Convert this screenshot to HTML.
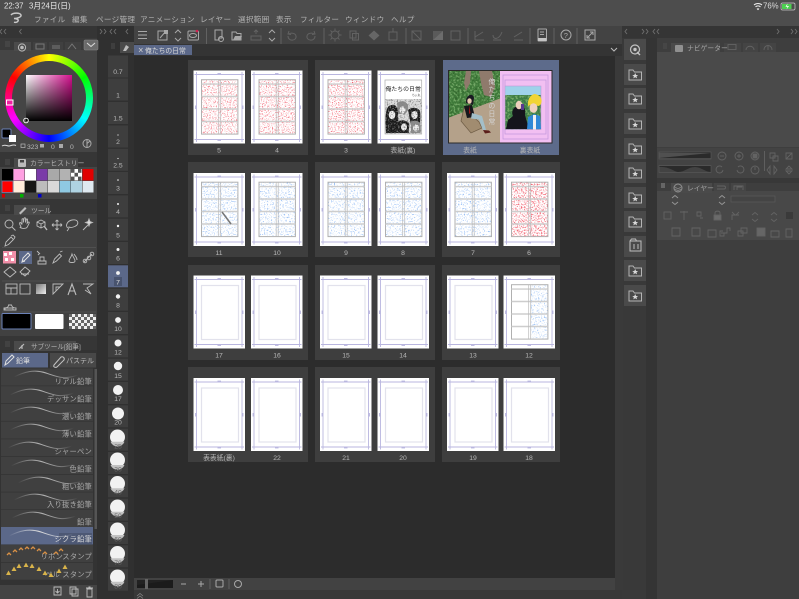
<!DOCTYPE html>
<html><head><meta charset="utf-8"><style>
html,body{margin:0;padding:0;background:#2c2c2c}
body{width:799px;height:599px;overflow:hidden;position:relative;filter:blur(.35px)}
svg{position:absolute;left:0;top:0}
text{font-family:"Liberation Sans","Noto Sans CJK JP",sans-serif;font-size:7.3px;fill:#b4b4b4}
.m text{font-size:7.6px;fill:#b2b2b2;letter-spacing:.3px}
.l text{text-anchor:middle;font-size:6.8px;fill:#b8b8b8}
.r text{text-anchor:end;font-size:7.3px;fill:#aaa;letter-spacing:.2px}
.i{fill:none;stroke:#a8a8a8;stroke-width:1}
.d{fill:none;stroke:#626262;stroke-width:1}
.t{fill:none;stroke:#bcbcbc;stroke-width:.9}
.n{fill:none;stroke:#636363;stroke-width:.9}
#wheel{position:absolute;left:5px;top:54px;width:88px;height:88px;border-radius:50%;background:conic-gradient(#ff0 0deg,#0f0 60deg,#0ff 120deg,#00f 180deg,#f0f 240deg,#f00 300deg,#ff0 360deg)}
#hole{position:absolute;left:12px;top:61px;width:74px;height:74px;border-radius:50%;background:#454545}
#sv{position:absolute;left:26px;top:75px;width:46px;height:46px;background:linear-gradient(to bottom,transparent,#000),linear-gradient(to right,#fff,#d4108e)}
</style></head><body>
<svg width="799" height="599" viewBox="0 0 799 599">
<defs>
<linearGradient id="bg" x1="0" x2="1" y1="0" y2="0"><stop offset="0" stop-color="#fff" stop-opacity="0"/><stop offset=".5" stop-color="#ddd"/><stop offset="1" stop-color="#fff" stop-opacity="0"/></linearGradient>
<filter id="r1" x="0" y="0" width="1" height="1" color-interpolation-filters="sRGB"><feTurbulence type="fractalNoise" baseFrequency=".8" numOctaves="2" seed="3"/><feColorMatrix values="0 0 0 0 .95 0 0 0 0 .36 0 0 0 0 .42 3.500 0 0 0 -1.800"/><feGaussianBlur stdDeviation=".3"/></filter>
<filter id="r2" x="0" y="0" width="1" height="1" color-interpolation-filters="sRGB"><feTurbulence type="fractalNoise" baseFrequency=".8" numOctaves="2" seed="11"/><feColorMatrix values="0 0 0 0 .95 0 0 0 0 .36 0 0 0 0 .42 3.500 0 0 0 -1.800"/><feGaussianBlur stdDeviation=".3"/></filter>
<filter id="r3" x="0" y="0" width="1" height="1" color-interpolation-filters="sRGB"><feTurbulence type="fractalNoise" baseFrequency=".8" numOctaves="2" seed="23"/><feColorMatrix values="0 0 0 0 .95 0 0 0 0 .36 0 0 0 0 .42 3.500 0 0 0 -1.800"/><feGaussianBlur stdDeviation=".3"/></filter>
<filter id="r4" x="0" y="0" width="1" height="1" color-interpolation-filters="sRGB"><feTurbulence type="fractalNoise" baseFrequency=".7" numOctaves="2" seed="37"/><feColorMatrix values="0 0 0 0 .95 0 0 0 0 .36 0 0 0 0 .42 4 0 0 0 -1.950"/><feGaussianBlur stdDeviation=".3"/></filter>
<filter id="b1" x="0" y="0" width="1" height="1" color-interpolation-filters="sRGB"><feTurbulence type="fractalNoise" baseFrequency=".7" numOctaves="2" seed="5"/><feColorMatrix values="0 0 0 0 .45 0 0 0 0 .66 0 0 0 0 .95 3 0 0 0 -1.600"/><feGaussianBlur stdDeviation=".3"/></filter>
<filter id="b2" x="0" y="0" width="1" height="1" color-interpolation-filters="sRGB"><feTurbulence type="fractalNoise" baseFrequency=".7" numOctaves="2" seed="14"/><feColorMatrix values="0 0 0 0 .45 0 0 0 0 .66 0 0 0 0 .95 3 0 0 0 -1.600"/><feGaussianBlur stdDeviation=".3"/></filter>
<filter id="b3" x="0" y="0" width="1" height="1" color-interpolation-filters="sRGB"><feTurbulence type="fractalNoise" baseFrequency=".7" numOctaves="2" seed="29"/><feColorMatrix values="0 0 0 0 .45 0 0 0 0 .66 0 0 0 0 .95 3 0 0 0 -1.600"/><feGaussianBlur stdDeviation=".3"/></filter>
<filter id="g1" x="0" y="0" width="1" height="1" color-interpolation-filters="sRGB"><feTurbulence type="fractalNoise" baseFrequency=".45" numOctaves="2" seed="8"/><feColorMatrix values="0 0 0 0 .2 0 0 0 0 .4 0 0 0 0 .18 5 0 0 0 -2.700"/></filter>
<filter id="g2" x="0" y="0" width="1" height="1" color-interpolation-filters="sRGB"><feTurbulence type="fractalNoise" baseFrequency=".5" numOctaves="2" seed="17"/><feColorMatrix values="0 0 0 0 .45 0 0 0 0 .66 0 0 0 0 .4 6 0 0 0 -2.900"/></filter>
<filter id="k1" x="0" y="0" width="1" height="1" color-interpolation-filters="sRGB"><feTurbulence type="fractalNoise" baseFrequency=".7" numOctaves="2" seed="41"/><feColorMatrix values="0 0 0 0 .5 0 0 0 0 .5 0 0 0 0 .5 4 0 0 0 -2"/></filter>
<symbol id="pg" overflow="visible"><rect width="51.5" height="73" fill="#fff"/></symbol>
<symbol id="fr" overflow="visible"><path d="M3 1.500v70M48.500 1.500v70M1 4h49.500M1 69h49.500" fill="none" stroke="#b9b6df" stroke-width=".9"/><g fill="#b9b6df"><rect x="24" y="2.600" width="3.500" height="1.400"/><rect x="24" y="69" width="3.500" height="1.400"/><rect x="1.600" y="35" width="1.400" height="3.500"/><rect x="48.500" y="35" width="1.400" height="3.500"/></g></symbol>
<symbol id="in" overflow="visible"><rect x="8" y="10" width="37" height="54" fill="none" stroke="#e2e2ec" stroke-width="1.200"/></symbol>
<symbol id="gr" overflow="visible"><g fill="none"><rect x="8" y="9.200" width="36.400" height="54.400" stroke="#b0b0b0" stroke-width="1"/><path d="M8 13.600h36.400M8 26h36.400M8 38.500h36.400M8 51h36.400" stroke="#cdcdcd" stroke-width="1.400"/><path d="M25.200 9.200v54.400M27.200 9.200v54.400" stroke="#bbb" stroke-width=".7"/></g></symbol>
<symbol id="br" overflow="visible"><path d="M0 9C10 4 20 1 32 5S50 12 64 7" fill="none" stroke="url(#bg)" stroke-width="1"/></symbol>
<symbol id="fs" overflow="visible"><rect width="22" height="21" fill="#4a4a4a"/><path d="M5 6h4l1.500 2H17.500V16H5z" fill="none" stroke="#b4b4b4" stroke-width="1"/><path d="M11.200 9l.9 2 2 .1-1.600 1.300.6 2-1.900-1.100-1.900 1.100.6-2L8.300 11.100l2-.1z" fill="#d8d8d8"/></symbol>
<linearGradient id="gd" x1="0" y1="0" x2="1" y2="1"><stop offset="0" stop-color="#777"/><stop offset="1" stop-color="#eee"/></linearGradient>
</defs>

<!-- base areas -->
<rect width="799" height="599" fill="#2c2c2c"/>
<rect width="799" height="26" fill="#4d4d4d"/>
<rect y="26" width="799" height="12" fill="#353535"/>
<rect x="0" y="38" width="97" height="561" fill="#363636"/>
<rect x="97" y="26" width="37" height="573" fill="#303030"/>
<rect x="622" y="38" width="35" height="561" fill="#393939"/>
<rect x="646" y="38" width="11" height="561" fill="#343434"/>
<rect x="657" y="38" width="142" height="561" fill="#3e3e3e"/>
<rect x="134" y="26" width="488" height="18" fill="#434343"/>
<rect x="134" y="44" width="488" height="12" fill="#343434"/>
<rect x="615" y="56" width="8" height="534" fill="#3a3a3a"/>
<rect x="134" y="578" width="481" height="12" fill="#424242"/>
<rect x="134" y="590" width="488" height="9" fill="#383838"/>

<!-- status and menu -->
<text x="4" y="8.500" style="font-size:7.800px;fill:#e4e4e4">22:37</text>
<text x="29" y="8.500" style="font-size:7.800px;fill:#e4e4e4">3月24日(日)</text>
<path d="M754 5a6 6 0 0 1 8 0M755.500 6.800a4 4 0 0 1 5 0M757 8.500l1 1 1-1" fill="none" stroke="#eee" stroke-width="1"/>
<text x="763" y="8.500" style="font-size:7.800px;fill:#ddd">76%</text>
<rect x="781" y="3" width="14" height="7" rx="1.500" fill="none" stroke="#ccc" stroke-width=".7"/><rect x="782" y="4" width="9.500" height="5" fill="#4ccf50"/><path d="M787.500 3.500l-2 3.200h2l-1 2.800 2.500-3.500h-2z" fill="#fff"/>
<path d="M11 15c2-2.500 9-2.500 10 0 .7 2.500-5 3.500-7 3.500 3 0 6 1.500 3 3.500-1 .5-2 .5-3 .2" fill="none" stroke="#c9c9c9" stroke-width="1.500"/>
<g class="m"><text x="34" y="22">ファイル</text><text x="72" y="22">編集</text><text x="96" y="22">ページ管理</text><text x="140" y="22">アニメーション</text><text x="200" y="22">レイヤー</text><text x="238" y="22">選択範囲</text><text x="276" y="22">表示</text><text x="300" y="22">フィルター</text><text x="345" y="22">ウィンドウ</text><text x="391" y="22">ヘルプ</text></g>
<g fill="none" stroke="#707070" stroke-width=".9"><path d="M2 29l-2 2.500 2 2.500M6 29l-2 2.500 2 2.500M21.500 29l-2 2.500 2 2.500M100 29l2 2.500-2 2.500M104 29l2 2.500-2 2.500M112 29l-2 2.500 2 2.500M116 29l-2 2.500 2 2.500M128 29l-2 2.500 2 2.500M627 29l-2 2.500 2 2.500M642 29l2 2.500-2 2.500M646 29l2 2.500-2 2.500M655 29l-2 2.500 2 2.500M659 29l-2 2.500 2 2.500M777 29l2 2.500-2 2.500M791 29l2 2.500-2 2.500M795 29l2 2.500-2 2.500"/></g>

<!-- main toolbar -->
<path class="i" d="M138 31.500h9M138 35h9M138 38.500h9" stroke-width="1.300"/>
<path class="i" d="M158 31h9v9h-9zM160 38l6-7"/><rect x="164" y="30" width="4" height="4" fill="#a8a8a8"/>
<path class="i" d="M175 33l3-3 3 3M175 38l3 3 3-3"/>
<rect x="188" y="31" width="10.500" height="9" rx="1" class="i"/><ellipse cx="193" cy="35.500" rx="3.500" ry="2" class="i"/><circle cx="197" cy="31" r="1.300" fill="#d02050"/>
<path class="d" d="M206.500 28v16"/>
<path class="i" d="M215 30h7v8h-3v2h-4zM215 30v8"/><circle cx="221" cy="39" r="2.500" class="i"/>
<path class="i" d="M232 32h4l1 1.500h4V40H232z"/><path d="M233 40l2-4h7l-2 4z" fill="#a8a8a8"/>
<path class="d" d="M251 40v-4h10v4zM256 30v4M254 32l2-2 2 2" stroke="#808080"/>
<path class="i" d="M269 33l3-3 3 3M269 38l3 3 3-3"/>
<path class="d" d="M281 28v16M324 28v16M406 28v16M468 28v16M530 28v16M554 28v16M577 28v16"/>
<path class="d" d="M288 36c0 6 9 5 8 0-.5-3-5-3.500-7-2M289 31l-1 3 3 .5M315 36c0 6-9 5-8 0 .5-3 5-3.500 7-2M314 31l1 3-3 .5"/>
<circle cx="335" cy="35" r="4" class="d"/><path class="d" d="M335 28.500v2M335 39.500v2M328.500 35h2M339.500 35h2M330.500 30.500l1.500 1.500M338 38l1.500 1.500M339.500 30.500L338 32M332 38l-1.500 1.500"/>
<path class="d" d="M350 31h6v7h-6zM352.500 33.500h6v6.500h-6z"/>
<path d="M374 30.500l5.500 5-5.500 5-5.500-5z" fill="#666"/>
<path class="d" d="M389 32h8v8h-8zM393 28v4"/>
<path class="d" d="M412 31h9v9h-9zM412 31l9 9"/>
<path d="M433 40V31h10v9z" fill="#5a5a5a"/><path d="M433 40l10-9v9z" fill="#6c6c6c"/>
<path class="d" d="M451 31h9v9h-9z" stroke-width="1.400"/>
<path class="d" d="M475 40h9M475 40v-9M475 37l8-5"/><path class="d" d="M493 40h8M493 35c0 5 6 5 9-3"/><path class="d" d="M514 40h9M514 37l8-5"/>
<rect x="538" y="29" width="8.500" height="12" rx=".5" class="i" fill="none"/><rect x="538" y="38" width="8.500" height="3" fill="#c4c4c4"/><path class="i" d="M540 32h4M540 34.500h4"/>
<circle cx="566" cy="35" r="5" class="i"/><text x="563.800" y="38" style="font-size:7.500px;fill:#aaa">?</text>
<rect x="585" y="30" width="10" height="10" class="i"/><path class="i" d="M587 38l6-6M590 32h3v3M587 35v3h3"/>

<!-- doc tab -->
<rect x="134" y="45" width="58" height="10" fill="#5b6889"/>
<path d="M139 48l3.500 4M142.500 48l-3.500 4" stroke="#ccc" stroke-width=".7"/>
<text x="145" y="53" style="font-size:6.800px;fill:#d8d8d8">俺たちの日常</text>
<path d="M611 48l3 3 3-3" fill="none" stroke="#bbb" stroke-width="1"/>

<!-- page panels -->
<g fill="#3e3e3e">
<rect x="188" y="60" width="120" height="95"/><rect x="315" y="60" width="120" height="95"/>
<rect x="188" y="162" width="120" height="95"/><rect x="315" y="162" width="120" height="95"/><rect x="442" y="162" width="118" height="95"/>
<rect x="188" y="265" width="120" height="95"/><rect x="315" y="265" width="120" height="95"/><rect x="442" y="265" width="118" height="95"/>
<rect x="188" y="367" width="120" height="95"/><rect x="315" y="367" width="120" height="95"/><rect x="442" y="367" width="118" height="95"/>
</g>
<rect x="443" y="60" width="116" height="95" fill="#5d6b8b"/>

<!-- row 1 -->
<use href="#pg" x="193.500" y="70.500"/><rect x="201" y="80" width="37" height="54" filter="url(#r1)"/><use href="#gr" x="193.500" y="70.500"/><use href="#fr" x="193.500" y="70.500"/>
<use href="#pg" x="251" y="70.500"/><rect x="259" y="80" width="37" height="54" filter="url(#r2)"/><use href="#gr" x="251" y="70.500"/><use href="#fr" x="251" y="70.500"/>
<use href="#pg" x="320" y="70.500"/><rect x="328" y="80" width="37" height="54" filter="url(#r3)"/><use href="#gr" x="320" y="70.500"/><use href="#fr" x="320" y="70.500"/>
<use href="#pg" x="377.500" y="70.500"/><use href="#fr" x="377.500" y="70.500"/>
<rect x="385" y="80" width="36.700" height="54" fill="#fff" stroke="#aaa" stroke-width=".7"/>
<text x="385.500" y="91" style="font-size:5.900px;fill:#222">俺たちの日常</text>
<text x="412" y="96" style="font-size:2.800px;fill:#444">ちぃ丸</text>
<rect x="385.500" y="99" width="36" height="34.500" fill="#dcdcdc"/>
<g fill="#1a1a1a"><path d="M386 133c-1-12-1-24 3-27 5-3 10 0 9 8l1 19z"/><path d="M408 110c3-3 10-3 12 1 1 6 0 10 0 14h-9z"/><path d="M398 122c3-3 8-2 11 1 1 4-1 6 0 10h-11z"/></g>
<g fill="#8c8c8c"><path d="M397 103c4-3 9-2 11 2 1 5-1 7-3 9l-7 0z"/><path d="M411 122c2-2 7-2 9 1 1 4 1 6 0 10h-9z"/></g>
<g fill="#efefef"><ellipse cx="392" cy="115" rx="3.300" ry="4.200"/><ellipse cx="402.500" cy="110" rx="3" ry="3.600"/><ellipse cx="414.500" cy="115" rx="3.200" ry="4"/><ellipse cx="404" cy="127" rx="3" ry="3.600"/><ellipse cx="416" cy="128" rx="3" ry="3.600"/></g>
<rect x="385.500" y="99" width="36" height="34.500" filter="url(#k1)"/>

<!-- spread -->
<rect x="448" y="70" width="104.500" height="73.500" fill="#2a2a2a"/>
<rect x="449" y="71" width="51" height="71.500" fill="#3f7a3a"/>
<rect x="449" y="71" width="51" height="50" filter="url(#g2)"/>
<rect x="449" y="71" width="51" height="50" filter="url(#g1)"/>
<g fill="#8f7a6c"><path d="M466 71h5l-1 12-4 8-2-8z"/><path d="M479 71h13l3 16-4 10-7-2-3-12z"/></g>
<path d="M449 117.500l51-19v44h-51z" fill="#b4a18a"/>
<path d="M464 108l15 14 3 6-11 5-10-12z" fill="#a18c70" stroke="#6e5c45" stroke-width=".7"/>
<path d="M466 103c-1-8 7-11 8-5l-1 7z" fill="#1a1a22"/><ellipse cx="469.500" cy="101" rx="2.200" ry="2.800" fill="#e8c8b0"/>
<path d="M464 106l8-1 3 12-8 1z" fill="#17171c"/><path d="M469 105l1.500 8-1.500 1z" fill="#a01616"/>
<path d="M472 113l10 3 4 14-3 .5-4-11-8-1z" fill="#a3bfc9"/><path d="M483 130l6 .5 2 2-6 1z" fill="#5a1e1a"/>
<g><text x="488.500" y="84" style="font-size:6.800px;fill:#d4d4d4">俺</text><text x="488.500" y="92" style="font-size:6.800px;fill:#d4d4d4">た</text><text x="488.500" y="100" style="font-size:6.800px;fill:#d4d4d4">ち</text><text x="488.500" y="108" style="font-size:6.800px;fill:#d4d4d4">の</text><text x="488.500" y="116" style="font-size:6.800px;fill:#d4d4d4">日</text><text x="488.500" y="124" style="font-size:6.800px;fill:#d4d4d4">常</text></g>
<rect x="500" y="71" width="51.500" height="71.500" fill="#f2bff2"/>
<g fill="none" stroke="#c59add" stroke-width=".8"><rect x="503" y="75" width="45" height="64"/><rect x="505" y="80" width="41" height="54"/></g>
<rect x="505" y="86" width="36" height="43.500" fill="#9fd2ea"/><rect x="505" y="95" width="36" height="34.500" fill="#3d7c45"/>
<rect x="505" y="95" width="36" height="34.500" filter="url(#g2)"/>
<rect x="505" y="86" width="36" height="43.500" fill="none" stroke="#bb9bd6" stroke-width=".6"/>
<path d="M506 129l2-9 5-4c-2-4 0-9 5-10 6-1 8 3 7 9l4 14z" fill="#15151c"/><ellipse cx="519" cy="105" rx="3.300" ry="4.300" fill="#eccfbc"/><rect x="521" y="104" width="3" height="6" fill="#5a3a90"/>
<path d="M527 129l1-12 6-3 6 2 1 13z" fill="#2f88d6"/><rect x="533" y="115" width="3" height="14.500" fill="#f0f0f0"/>
<path d="M528 106c-1-8 4-12 7-12 5 1 8 5 6 10l-2 2-8-1z" fill="#f1d534"/><ellipse cx="533.500" cy="108" rx="4" ry="4.800" fill="#f0d2bf"/>

<!-- row 2 -->
<use href="#pg" x="193.500" y="173"/><rect x="201" y="182" width="37" height="55" filter="url(#b1)"/><use href="#gr" x="193.500" y="173"/><use href="#fr" x="193.500" y="173"/><path d="M222 212l9 12" stroke="#777" stroke-width="1.600"/>
<use href="#pg" x="251" y="173"/><rect x="259" y="182" width="37" height="55" filter="url(#b2)"/><use href="#gr" x="251" y="173"/><use href="#fr" x="251" y="173"/>
<use href="#pg" x="320" y="173"/><rect x="328" y="182" width="37" height="55" filter="url(#b3)"/><use href="#gr" x="320" y="173"/><use href="#fr" x="320" y="173"/>
<use href="#pg" x="377.500" y="173"/><rect x="385" y="182" width="37" height="55" filter="url(#b1)"/><use href="#gr" x="377.500" y="173"/><use href="#fr" x="377.500" y="173"/>
<use href="#pg" x="447" y="173"/><rect x="455" y="182" width="37" height="55" filter="url(#b2)"/><use href="#gr" x="447" y="173"/><use href="#fr" x="447" y="173"/>
<use href="#pg" x="503.500" y="173"/><rect x="511" y="182" width="37" height="55" filter="url(#r4)"/><use href="#gr" x="503.500" y="173"/><use href="#fr" x="503.500" y="173"/>

<!-- row 3 -->
<use href="#pg" x="193.500" y="275.500"/><use href="#in" x="193.500" y="275.500"/><use href="#fr" x="193.500" y="275.500"/>
<use href="#pg" x="251" y="275.500"/><use href="#in" x="251" y="275.500"/><use href="#fr" x="251" y="275.500"/>
<use href="#pg" x="320" y="275.500"/><use href="#in" x="320" y="275.500"/><use href="#fr" x="320" y="275.500"/>
<use href="#pg" x="377.500" y="275.500"/><use href="#in" x="377.500" y="275.500"/><use href="#fr" x="377.500" y="275.500"/>
<use href="#pg" x="447" y="275.500"/><use href="#in" x="447" y="275.500"/><use href="#fr" x="447" y="275.500"/>
<use href="#pg" x="503.500" y="275.500"/><rect x="531" y="285" width="17" height="54" filter="url(#b3)"/><use href="#gr" x="503.500" y="275.500"/><use href="#fr" x="503.500" y="275.500"/>

<!-- row 4 -->
<use href="#pg" x="193.500" y="378"/><use href="#in" x="193.500" y="378"/><use href="#fr" x="193.500" y="378"/>
<use href="#pg" x="251" y="378"/><use href="#in" x="251" y="378"/><use href="#fr" x="251" y="378"/>
<use href="#pg" x="320" y="378"/><use href="#in" x="320" y="378"/><use href="#fr" x="320" y="378"/>
<use href="#pg" x="377.500" y="378"/><use href="#in" x="377.500" y="378"/><use href="#fr" x="377.500" y="378"/>
<use href="#pg" x="447" y="378"/><use href="#in" x="447" y="378"/><use href="#fr" x="447" y="378"/>
<use href="#pg" x="503.500" y="378"/><use href="#in" x="503.500" y="378"/><use href="#fr" x="503.500" y="378"/>

<g class="l">
<text x="219" y="152.500">5</text><text x="277" y="152.500">4</text><text x="346" y="152.500">3</text><text x="403" y="152.500">表紙(裏)</text><text x="470" y="152.500">表紙</text><text x="530" y="152.500">裏表紙</text>
<text x="219" y="255">11</text><text x="277" y="255">10</text><text x="346" y="255">9</text><text x="403" y="255">8</text><text x="473" y="255">7</text><text x="529" y="255">6</text>
<text x="219" y="357.500">17</text><text x="277" y="357.500">16</text><text x="346" y="357.500">15</text><text x="403" y="357.500">14</text><text x="473" y="357.500">13</text><text x="529" y="357.500">12</text>
<text x="219" y="460">表表紙(裏)</text><text x="277" y="460">22</text><text x="346" y="460">21</text><text x="403" y="460">20</text><text x="473" y="460">19</text><text x="529" y="460">18</text>
</g>

<!-- canvas bottom bar -->
<rect x="137" y="580" width="36" height="8" fill="#222"/><path d="M137 585l36-5v8h-36z" fill="#1b1b1b"/><rect x="145" y="579" width="3" height="10" fill="#666"/>
<path class="i" d="M181 584h5M198 584h6M201 581v6"/><path class="d" d="M210 579v10M229 579v10"/>
<rect x="216" y="580" width="7" height="7" rx="1" class="i"/><circle cx="238" cy="584" r="3.500" class="i"/>
<path d="M137 596l3-2.500 3 2.500M137 598.500l3-2.500 3 2.500" fill="none" stroke="#888" stroke-width=".7"/>

<!-- color panel -->
<rect x="0" y="50" width="97" height="102" fill="#454545"/>
<rect x="0" y="38" width="97" height="12" fill="#3a3a3a"/>
<path d="M5 44h5M5 46h5M5 42h5" stroke="#666" stroke-width=".6"/>
<rect x="14" y="42" width="17" height="9" fill="#4b4b4b"/><circle cx="22" cy="47.500" r="3.600" fill="none" stroke="#bbb"/><circle cx="22" cy="47.500" r="1.800" fill="#bbb"/>
<rect x="33" y="42" width="14" height="8" fill="#404040"/><rect x="36" y="44" width="8" height="5" fill="none" stroke="#777"/>
<rect x="49" y="42" width="14" height="8" fill="#404040"/><path d="M52 46h8M52 48h8" stroke="#777"/>
<rect x="65" y="42" width="16" height="8" fill="#404040"/><path d="M68 49l4-5 4 5" fill="none" stroke="#777"/>
<rect x="84" y="40" width="14" height="10" rx="1" fill="#6b6b6b" stroke="#888" stroke-width=".5"/><path d="M87 43l4 3.500 4-3.500" fill="none" stroke="#ddd"/>

<!-- history panel -->
<rect x="0" y="167" width="97" height="32" fill="#454545"/>
<path d="M5 160h5M5 162h5M5 164h5" stroke="#666" stroke-width=".6"/>
<rect x="14" y="158" width="64" height="10" fill="#4a4a4a"/><rect x="18" y="159" width="8" height="8" rx="1" fill="#bbb"/><rect x="20" y="160" width="4" height="2.500" fill="#444"/>
<text x="30" y="165.500" style="font-size:6.800px;fill:#b0b0b0">カラーヒストリー</text>
<rect x="2" y="169" width="11" height="11.500" fill="#000"/><rect x="13.500" y="169" width="11" height="11.500" fill="#ffa0e2"/><rect x="25" y="169" width="11" height="11.500" fill="#fff"/><rect x="36.500" y="169" width="11" height="11.500" fill="#7a3ba8"/><rect x="48" y="169" width="11" height="11.500" fill="#a9a9a9"/><rect x="59.500" y="169" width="11" height="11.500" fill="#b2b2b2"/>
<rect x="71" y="169" width="11" height="11.500" fill="#fff"/><g fill="#555"><rect x="71" y="169" width="3.500" height="3.800"/><rect x="78" y="169" width="3.500" height="3.800"/><rect x="74.500" y="172.800" width="3.500" height="3.800"/><rect x="71" y="176.600" width="3.500" height="3.800"/><rect x="78" y="176.600" width="3.500" height="3.800"/></g>
<rect x="82.500" y="169" width="11" height="11.500" fill="#e00000"/>
<rect x="2" y="181" width="11" height="11.500" fill="#ff0000" stroke="#6d7fae" stroke-width=".8"/><rect x="13.500" y="181" width="11" height="11.500" fill="#ffecdc"/><rect x="25" y="181" width="11" height="11.500" fill="#161616"/><rect x="36.500" y="181" width="11" height="11.500" fill="#bcbcbc"/><rect x="48" y="181" width="11" height="11.500" fill="#d9d9d9"/><rect x="59.500" y="181" width="11" height="11.500" fill="#8fc9e2"/><rect x="71" y="181" width="11" height="11.500" fill="#afd3e2"/><rect x="82.500" y="181" width="11" height="11.500" fill="#dfe9f0"/>
<rect x="2" y="194" width="3" height="3.500" fill="#d00000"/><rect x="20" y="194" width="3.500" height="3.500" fill="#00b000"/><rect x="38" y="194" width="3.500" height="3.500" fill="#0000c8"/>

<!-- tool panel -->
<rect x="0" y="214" width="97" height="122" fill="#414141"/>
<path d="M5 206h5M5 208h5M5 210h5" stroke="#666" stroke-width=".6"/>
<rect x="14" y="205" width="36" height="10" fill="#4a4a4a"/>
<path d="M19 213l6-6 1.500 1.500-6 6z" fill="#bbb"/><text x="31" y="213" style="font-size:6.800px;fill:#b0b0b0">ツール</text>
<g class="t">
<circle cx="9" cy="224" r="4"/><path d="M12 227l3.500 3.500"/>
<path d="M21 227c-1-2-2-4-1-4.500 1 0 1.500 1 2 2l0-5c0-1 1.500-1 1.500 0v3l.5-4c.2-1 1.500-1 1.500 0l0 4 .8-3c.3-1 1.500-.7 1.300.3l-.5 3.500 1-1c1-.7 1.500 0 1 1l-2 4c-1 1.500-6 1.500-7 0z"/>
<path d="M37 222l4-2 4 2v4l-4 2-4-2zM41 224v4M41 224l4-2M41 224l-4-2"/><path d="M44 226l3 4" stroke-width="1.400"/>
<path d="M57 220v10M52 225h10M57 220l-1.500 1.500M57 220l1.500 1.500M57 230l-1.500-1.500M57 230l1.500-1.500M52 225l1.500-1.500M52 225l1.500 1.500M62 225l-1.500-1.500M62 225l-1.500 1.500"/>
<path d="M68 228c-3-2-1-7 4-8 5-1 7 2 5 5-2 2-6 3-8 2 0 2-1 3-2 4"/>
<path d="M83 230l6-6"/><path d="M89 219l1 2.500 2.500 1-2.500 1-1 2.500-1-2.500-2.500-1 2.500-1z" fill="#ddd"/>
<path d="M5 246l1-4 5-5 2.500 2.500-5 5zM11 236l2-1 2 2-1 2"/>
</g>
<path d="M2 247.500h94M2 281h94M2 312h94" stroke="#555" stroke-width=".7"/>
<rect x="3" y="251" width="13" height="12.500" fill="#f08fa8"/><path d="M4 253h3v3H4zM9 252h3v3H9zM5 258h3v3H5zM11 258h3v3h-3z" fill="#fff"/>
<rect x="19" y="251" width="13" height="13" fill="#5b6889"/><path d="M22 262l1-4 5-5 2 2-5 5zM22 262l3-1" fill="none" stroke="#e2e2e2"/>
<g class="t">
<path d="M38 261h8v3h-8zM40 261v-4l4-0v4M38 254l1 1M37 251l3 3"/>
<path d="M53 263l1.500-4 5-5 2 2-5 5zM60 252l2.500-1"/>
<path d="M69 261c0-2 2-3 3-7 1 3 3 5 3 7s-6 2-6 0zM74 254c1 2 3 3 3 6"/>
<path d="M84 262l8-8"/><circle cx="85" cy="261" r="1.800"/><circle cx="89" cy="258" r="1.800"/><circle cx="92" cy="254" r="1.800"/>
<path d="M10 267l6 5-6 5-6-5z"/><path d="M25 267l5 4-5 5-5-4zM21 274h8"/>
<rect x="6" y="284" width="11" height="10"/><path d="M6 288h11M11 288v6"/>
<rect x="20" y="284" width="10" height="10"/>
<path d="M53 294v-10h10z"/><path d="M56 291v-4h4"/>
<path d="M68 295l4-11 4 11M69.500 291h5" stroke-width="1.100"/>
<path d="M83 284h10l-6 4 4 6-6-4"/>
<path d="M5 310v-2h8v2zM4 310h12v-2c-3 0-4-1-4.500-3h-3c0 2-1 3-4.500 3z"/>
</g>
<rect x="36" y="284" width="10" height="10" fill="url(#gd)"/>
<rect x="2" y="313.500" width="29" height="15.500" rx="1" fill="#000" stroke="#6c82b8" stroke-width="1"/>
<rect x="35" y="314" width="28.500" height="15" rx="1" fill="#fff"/>
<rect x="69" y="314" width="27" height="15" fill="#f0f0f0"/>
<g fill="#666"><rect x="69" y="314" width="3" height="3"/><rect x="75" y="314" width="3" height="3"/><rect x="81" y="314" width="3" height="3"/><rect x="87" y="314" width="3" height="3"/><rect x="93" y="314" width="3" height="3"/><rect x="72" y="317" width="3" height="3"/><rect x="78" y="317" width="3" height="3"/><rect x="84" y="317" width="3" height="3"/><rect x="90" y="317" width="3" height="3"/><rect x="69" y="320" width="3" height="3"/><rect x="75" y="320" width="3" height="3"/><rect x="81" y="320" width="3" height="3"/><rect x="87" y="320" width="3" height="3"/><rect x="93" y="320" width="3" height="3"/><rect x="72" y="323" width="3" height="3"/><rect x="78" y="323" width="3" height="3"/><rect x="84" y="323" width="3" height="3"/><rect x="90" y="323" width="3" height="3"/><rect x="69" y="326" width="3" height="3"/><rect x="75" y="326" width="3" height="3"/><rect x="81" y="326" width="3" height="3"/><rect x="87" y="326" width="3" height="3"/><rect x="93" y="326" width="3" height="3"/></g>

<!-- sub tool -->
<rect x="0" y="350" width="97" height="235" fill="#333"/>
<path d="M5 342h5M5 344h5M5 346h5" stroke="#666" stroke-width=".6"/>
<rect x="14" y="341" width="62" height="10" fill="#4a4a4a"/><path d="M19 349l5-5M22 349v-4" stroke="#bbb" stroke-width="1.200"/>
<text x="31" y="349" style="font-size:6.600px;fill:#b0b0b0">サブツール[鉛筆]</text>
<rect x="2" y="353" width="46" height="14.500" fill="#5b6889"/><rect x="50" y="353" width="46" height="14.500" fill="#484848"/>
<path d="M5 365l1-4 6-6 2 2-6 6z" fill="none" stroke="#e0e0e0"/><text x="16" y="363" style="font-size:7px;fill:#ddd">鉛筆</text>
<path d="M54 365l7-8c2-1 4 1 3 3l-7 7c-2 1-4-0-3-2z" fill="none" stroke="#c4c4c4"/><text x="66" y="363" style="font-size:7px;fill:#bbb">パステル</text>
<rect x="94.500" y="369" width="2.500" height="160" fill="#555"/>
<g fill="#404040"><rect x="1" y="368.500" width="92" height="17"/><rect x="1" y="386.200" width="92" height="17"/><rect x="1" y="403.900" width="92" height="17"/><rect x="1" y="421.600" width="92" height="17"/><rect x="1" y="439.300" width="92" height="17"/><rect x="1" y="457" width="92" height="17"/><rect x="1" y="474.700" width="92" height="17"/><rect x="1" y="492.400" width="92" height="17"/><rect x="1" y="510" width="92" height="17"/><rect x="1" y="545" width="92" height="17"/><rect x="1" y="562.700" width="92" height="17"/></g>
<rect x="1" y="527" width="92" height="17.500" fill="#5b6889"/><rect x="59" y="533" width="33" height="11" fill="#4d5874"/>
<g opacity=".75"><use href="#br" x="14" y="368"/><use href="#br" x="10" y="386"/><use href="#br" x="10" y="404"/><use href="#br" x="10" y="421"/><use href="#br" x="8" y="439"/><use href="#br" x="11" y="457"/><use href="#br" x="18" y="474"/><use href="#br" x="14" y="491"/><use href="#br" x="12" y="509"/></g><use href="#br" x="9" y="527"/>
<g class="r"><text x="92" y="384">リアル鉛筆</text><text x="92" y="401.500">デッサン鉛筆</text><text x="92" y="419">濃い鉛筆</text><text x="92" y="436.500">薄い鉛筆</text><text x="92" y="454">シャーペン</text><text x="92" y="471.500">色鉛筆</text><text x="92" y="489">粗い鉛筆</text><text x="92" y="507">入り抜き鉛筆</text><text x="92" y="524.500">鉛筆</text><text x="92" y="541.500" style="fill:#ddd">シクラ鉛筆</text><text x="92" y="559">スタンプ</text><text x="92" y="577">スタンプ</text><text x="63" y="559">リボン</text><text x="60" y="577">ベル</text></g>
<path d="M7 555l2-2 2 2M13 552l2-2 2 2M19 550l2-2 2 2M25 549l2-2 2 2M31 549l2-2 2 2M37 551l2-2 2 2M43 554l2-2 2 2M54 554l2-2 2 2M59 551l2-2 2 2" fill="none" stroke="#d99045" stroke-width="1.300"/>
<g fill="#d8b34a"><path d="M6 575l2.500-4.500 2.500 4.500zM11.500 571l2.500-4.500 2.500 4.500zM16.500 568l2.500-4.500 2.500 4.500zM23.500 567l2.500-4.500 2.500 4.500zM29.500 568l2.500-4.500 2.500 4.500zM36.500 571l2.500-4.500 2.500 4.500zM42.500 575l2.500-4.500 2.500 4.500zM48.500 577l2.500-4.500 2.500 4.500zM56.500 573l2.500-4.500 2.500 4.500zM62.500 569l2.500-4.500 2.500 4.500z"/></g>
<rect x="0" y="585" width="97" height="14" fill="#444"/>
<path class="t" d="M54 587h7v8h-7zM57.500 589v4M55.500 591l2 2 2-2M70 587h6v7h-6zM72 589h6v7h-6zM87 589h5v8h-5zM86 588h7M88.500 587h2"/>

<!-- brush size column -->
<g fill="#3e3e3e"><rect x="108" y="55.500" width="20" height="22"/><rect x="108" y="78.500" width="20" height="22"/><rect x="108" y="102" width="20" height="22"/><rect x="108" y="125.500" width="20" height="22"/><rect x="108" y="148.800" width="20" height="22"/><rect x="108" y="172" width="20" height="22"/><rect x="108" y="195.400" width="20" height="22"/><rect x="108" y="218.700" width="20" height="22"/><rect x="108" y="242" width="20" height="22"/><rect x="108" y="288.700" width="20" height="22"/><rect x="108" y="312" width="20" height="22"/><rect x="108" y="335.400" width="20" height="22"/><rect x="108" y="358.700" width="20" height="22"/><rect x="108" y="382" width="20" height="22"/><rect x="108" y="405.300" width="20" height="22"/><rect x="108" y="428.700" width="20" height="22"/><rect x="108" y="452" width="20" height="22"/><rect x="108" y="475.300" width="20" height="22"/><rect x="108" y="498.700" width="20" height="22"/><rect x="108" y="522" width="20" height="22"/><rect x="108" y="545.300" width="20" height="22"/><rect x="108" y="568.700" width="20" height="22"/></g>
<rect x="108" y="265.300" width="20" height="22" fill="#5b6889"/><rect x="114" y="277" width="8" height="9" fill="#48536e"/>
<rect x="120" y="42" width="14" height="11" fill="#4a4a4a"/><path d="M123 51l3-6 3 2-3 4z" fill="#bbb"/><path d="M111 44h4M111 46h4M111 48h4" stroke="#666" stroke-width=".6"/>
<g fill="#f2f2f2">
<circle cx="118" cy="135" r=".6"/><circle cx="118" cy="158.500" r=".6"/><circle cx="118" cy="180" r=".8"/><circle cx="118" cy="204" r="1"/><circle cx="118" cy="226" r="1.200"/><circle cx="118" cy="249.500" r="1.500"/><circle cx="118" cy="273" r="1.900"/><circle cx="118" cy="296.500" r="2.200"/><circle cx="118" cy="320" r="2.900"/><circle cx="118" cy="343" r="3.500"/><circle cx="118" cy="366" r="4.200"/><circle cx="118" cy="390" r="5"/><circle cx="118" cy="413.500" r="6"/>
<circle cx="117.500" cy="437" r="7.500"/><circle cx="117.500" cy="460" r="7.500"/><circle cx="117.500" cy="483.500" r="7.500"/><circle cx="117.500" cy="507" r="7.500"/><circle cx="117.500" cy="530" r="7.500"/><circle cx="117.500" cy="553.500" r="7.500"/><circle cx="117.500" cy="577" r="7.500"/>
</g>
<g fill="#c2c2c2"><path d="M110.500 441.800h14a7.500 7.500 0 0 1-14 0zM110.500 465h14a7.500 7.500 0 0 1-14 0zM110.500 488.300h14a7.500 7.500 0 0 1-14 0zM110.500 511.800h14a7.500 7.500 0 0 1-14 0zM110.500 535h14a7.500 7.500 0 0 1-14 0zM110.500 558.300h14a7.500 7.500 0 0 1-14 0zM110.500 581.800h14a7.500 7.500 0 0 1-14 0z"/></g>
<g class="l" style="text-anchor:middle"><text x="118" y="74">0.7</text><text x="118" y="97.500">1</text><text x="118" y="120.500">1.5</text><text x="118" y="144">2</text><text x="118" y="167.500">2.5</text><text x="118" y="190.500">3</text><text x="118" y="214">4</text><text x="118" y="237.500">5</text><text x="118" y="260.500">6</text><text x="118" y="284.500" style="fill:#ddd">7</text><text x="118" y="307.500">8</text><text x="118" y="331">10</text><text x="118" y="354.500">12</text><text x="118" y="378">15</text><text x="118" y="401">17</text><text x="118" y="424.500">20</text><text x="118" y="448.500" style="fill:#666">25</text><text x="118" y="471.500" style="fill:#666">30</text><text x="118" y="494.500" style="fill:#666">40</text><text x="118" y="518" style="fill:#666">50</text><text x="118" y="541.500" style="fill:#666">60</text><text x="118" y="565" style="fill:#666">70</text><text x="118" y="588.500" style="fill:#666">80</text></g>

<!-- material column -->
<rect x="624" y="39" width="22" height="21" fill="#4a4a4a"/><circle cx="635" cy="49.500" r="4.500" fill="none" stroke="#c4c4c4" stroke-width="1.200"/><path d="M637 52l3 3" stroke="#c4c4c4" stroke-width="1.400"/><circle cx="635" cy="49.500" r="1.700" fill="#c4c4c4"/>
<use href="#fs" x="624" y="64"/><use href="#fs" x="624" y="88"/><use href="#fs" x="624" y="113"/><use href="#fs" x="624" y="138"/><use href="#fs" x="624" y="162"/><use href="#fs" x="624" y="187"/><use href="#fs" x="624" y="211"/>
<rect x="624" y="236" width="22" height="21" fill="#4a4a4a"/><path d="M630 241h11v10h-11zM630 241l1.500-2h4l1 2M634 244v5M638 244v5" fill="none" stroke="#bdbdbd"/>
<use href="#fs" x="624" y="260"/><use href="#fs" x="624" y="285"/>

<!-- navigator -->
<rect x="657" y="52" width="142" height="95" fill="#4a4a4a"/>
<rect x="657" y="148" width="142" height="31" fill="#434343"/>
<path d="M663 44h4M663 46h4M663 48h4" stroke="#5e5e5e" stroke-width=".6"/>
<rect x="671" y="43" width="49" height="10" fill="#4a4a4a"/><rect x="724" y="43" width="17" height="9" fill="#444"/><rect x="743" y="43" width="15" height="9" fill="#444"/><rect x="760" y="43" width="16" height="9" fill="#444"/>
<rect x="675" y="45" width="8" height="7" rx="1" fill="#909090"/>
<text x="687" y="50.500" style="font-size:6.800px;fill:#a4a4a4">ナビゲーター</text>
<rect x="728" y="44.500" width="8" height="5" class="n"/><path class="n" d="M746 50c0-5 8-5 8 0M764 50c0-6 8-6 8 0M768 50v-4"/>
<path d="M659 158v-5l52-1v6z" fill="#2a2a2a"/><path d="M659 158v-5h52z" fill="#505050"/><rect x="659" y="152" width="52" height="7" fill="none" stroke="#5c5c5c" stroke-width=".6"/>
<path d="M659 172v-6h52v6c-6 0-10-5-16-5-7 0-10 5-17 5-3 0-10-6-19-5z" fill="#2a2a2a"/><rect x="659" y="165.500" width="52" height="7" fill="none" stroke="#5c5c5c" stroke-width=".6"/>
<g class="n"><circle cx="722" cy="156" r="4"/><path d="M720 156h4"/><circle cx="739" cy="156" r="4"/><path d="M737 156h4M739 154v4"/><circle cx="755" cy="156" r="4"/><rect x="753" y="154" width="4" height="4" fill="#636363"/><path d="M764.500 151v20"/><path d="M770 153h5v5h-5zM773 156h5v5h-5zM786 153h6v6h-6zM786 159l6-6"/>
<path d="M723 170a3.500 3.500 0 1 1-1-3M737 170a3.500 3.500 0 1 0 1-3"/><circle cx="755" cy="170" r="4"/><path d="M755 167v3M770 166l-3 4 3 4zM774 166l3 4-3 4zM789 166l-3 3h6zM789 174l-3-3h6z"/></g>

<!-- layer -->
<rect x="657" y="191" width="142" height="49" fill="#484848"/>
<rect x="657" y="178" width="142" height="5" fill="#383838"/>
<rect x="661" y="183" width="4" height="5" fill="#666"/>
<rect x="671" y="183" width="41" height="10" fill="#4a4a4a"/><rect x="714" y="183" width="15" height="8" fill="#454545"/><rect x="731" y="183" width="15" height="8" fill="#454545"/>
<circle cx="678" cy="188" r="4" fill="none" stroke="#929292"/><path d="M675 187l3 2 3-2M675 189l3 2 3-2" stroke="#929292" fill="none" stroke-width=".7"/>
<text x="687" y="190.500" style="font-size:6.800px;fill:#a4a4a4">レイヤー</text>
<path class="n" d="M717 186h7c2 0 2 3 0 3h-7M734 190v-4h9v4M737 190v-3h5"/>
<path d="M672 198l3-2.500 3 2.500M672 202l3 2.500 3-2.500M719 198l3-2.500 3 2.500M719 202l3 2.500 3-2.500" fill="none" stroke="#949494"/>
<rect x="731" y="196" width="44" height="6" fill="#444" stroke="#5e5e5e" stroke-width=".6"/>
<g class="n" stroke="#727272"><rect x="664" y="212" width="7" height="7"/><path d="M684 211v9M680 212h8M697 212h4v4h-4zM700 218h3M732 212l3 3M732 220v-5h7M739 212l-3 3"/><rect x="714" y="215" width="7" height="5" fill="#6a6a6a"/><path d="M715 215v-2c0-2.500 5-2.500 5 0v2"/><path d="M752 215l3-2.500 3 2.500M752 219l3 2.500 3-2.500M771 215l3-2.500 3 2.500M771 219l3 2.500 3-2.500"/></g>
<rect x="786" y="212" width="7" height="7" fill="#3a3a3a"/>
<g class="n" stroke="#6e6e6e"><path d="M672 228h8v8h-8zM692 228h8v8h-8zM708 230h8v7h-8zM721 233h6v-5h3v3M724 233v3h-4v-5h3M741 233v-5h6v5zM738 236v-5h5v5zM771 231h8v6h-8z"/><rect x="757" y="228" width="8" height="8" fill="#666"/><path d="M786 229h6v8h-6z"/></g>
</svg>
<div id="wheel"></div><div id="hole"></div><div id="sv"></div>
<svg width="799" height="599" viewBox="0 0 799 599" style="pointer-events:none">
<rect x="6.500" y="100" width="6.500" height="5" fill="#f020a0" stroke="#fff" stroke-width="1"/>
<circle cx="26" cy="120.500" r="2.300" fill="none" stroke="#fff" stroke-width=".9"/>
<rect x="2" y="129" width="9" height="9" rx="1" fill="#000" stroke="#6c82b8"/>
<rect x="9" y="135" width="7" height="7" fill="#fff"/>
<path d="M2 146c3-2 5 0 7 0s4-2 7-.5" fill="none" stroke="#ddd" stroke-width="1"/>
<rect x="21" y="144" width="4" height="3.500" fill="none" stroke="#b8b8b8" stroke-width=".7"/>
<text x="27" y="149" style="font-size:6.800px;fill:#b8b8b8">323</text>
<rect x="40" y="144" width="4" height="3.500" fill="#aaa"/>
<text x="51" y="149" style="font-size:6.800px;fill:#b8b8b8">0</text>
<rect x="59" y="144" width="4" height="4" fill="#aaa"/>
<text x="70" y="149" style="font-size:6.800px;fill:#b8b8b8">0</text>
<circle cx="87" cy="143.500" r="4" fill="none" stroke="#aaa"/><path d="M87 140v7M87 143.500l3-2.500" stroke="#aaa" fill="none"/>
</svg>
</body></html>
